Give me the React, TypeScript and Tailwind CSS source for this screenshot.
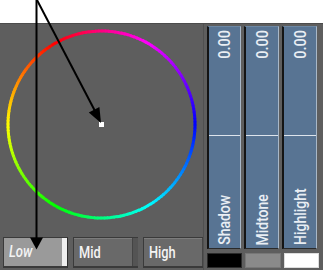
import React from "react";

const CX = 101.5;
const CY = 100.5;
const R = 93.5;
const N = 180;

function pt(a: number) {
  const rad = (a * Math.PI) / 180;
  return [CX + R * Math.sin(rad), CY - R * Math.cos(rad)];
}

const segs = Array.from({ length: N }, (_, i) => {
  const a0 = (i * 360) / N;
  const a1 = ((i + 1) * 360) / N + 0.6;
  const [x0, y0] = pt(a0);
  const [x1, y1] = pt(a1);
  const mid = (a0 + a1) / 2;
  const hue = (((330 - mid) % 360) + 360) % 360;
  return {
    d: `M ${x0.toFixed(2)} ${y0.toFixed(2)} A ${R} ${R} 0 0 1 ${x1.toFixed(2)} ${y1.toFixed(2)}`,
    color: `hsl(${hue.toFixed(1)}, 100%, 50%)`,
  };
});

const FONT = "font-[Roboto,'Liberation_Sans',Arial,sans-serif]";

function Button({ label, active }: { label: string; active?: boolean }) {
  if (active) {
    return (
      <div className="flex h-[31px] w-[65px] shrink-0 border-t border-b-2 border-l border-[#3a3a3a] border-r border-r-[#2e2e2e]">
        <div className={`flex flex-1 items-center bg-[#9a9a9a] pl-[5px] text-[16px] font-medium italic text-[#f4f4f4] ${FONT}`}>
          <span className="block origin-left scale-x-[0.82]">{label}</span>
        </div>
        <div className="w-[5px] bg-[#efefef]" />
      </div>
    );
  }
  return (
    <div className="flex h-[31px] w-[65px] shrink-0 border-t border-b-2 border-l border-[#3a3a3a]">
      <div className={`flex flex-1 items-center border-t border-[#7c7c7c] bg-[#696969] pl-[5px] text-[16px] font-medium text-[#f4f4f4] ${FONT}`}>
        <span className="block origin-left scale-x-[0.8]">{label}</span>
      </div>
      <div className="w-[6px] border-l border-[#444] bg-[#545454]" />
    </div>
  );
}

function Panel({ label }: { label: string }) {
  return (
    <div className="flex flex-col">
      <div className="flex h-[223px] flex-col border-l-2 border-r border-b border-l-[#141414] border-r-[#a8b7c7] border-b-[#2a2a2a] border-t border-t-[#6c87a3] bg-[#587493]">
        <div className="flex h-[109px] flex-col items-center border-b border-[#dde4ec] pt-[3px]">
          <span className={`rotate-180 text-[17px] font-medium leading-[17px] text-[#e9eef4] [writing-mode:vertical-rl] ${FONT}`}>
            <span className="block origin-bottom scale-y-[0.85]">0.00</span>
          </span>
        </div>
        <div className="flex flex-1 flex-col items-center justify-end pb-[3px]">
          <span className={`rotate-180 text-[17px] font-medium leading-[17px] text-[#e9eef4] [writing-mode:vertical-rl] ${FONT}`}>
            <span className="block origin-top scale-y-[0.82]">{label}</span>
          </span>
        </div>
      </div>
    </div>
  );
}

export default function App() {
  return (
    <div className="relative h-[270px] w-[323px] overflow-hidden bg-white">
      <div className="h-[23px] bg-white" />
      <div className="flex h-[247px] border-t border-[#4c4c4c] bg-[#5e5e5e]">
        <div className="flex w-[203px] shrink-0 flex-col">
          <svg width="203" height="213" className="block">
            {segs.map((s, i) => (
              <path key={i} d={s.d} stroke={s.color} strokeWidth={3} fill="none" />
            ))}
            <rect x="99" y="98" width="5" height="5" fill="#ffffff" />
          </svg>
          <div className="flex gap-[5px] overflow-hidden pl-[3px]">
            <Button label="Low" active />
            <Button label="Mid" />
            <Button label="High" />
          </div>
        </div>
        <div className="flex flex-1 flex-col border-l border-[#505050] pl-[3px] pt-[2px]">
          <div className="grid grid-cols-[34px_35px_35px] gap-[3px]">
            <Panel label="Shadow" />
            <Panel label="Midtone" />
            <Panel label="Highlight" />
          </div>
          <div className="mt-[4px] grid grid-cols-[35px_36px_35px] gap-[3px]">
            <div className="h-[15px] border border-[#2a2a2a] bg-black" />
            <div className="h-[15px] border border-[#777] bg-[#8a8a8a]" />
            <div className="h-[15px] border border-[#ddd] bg-white" />
          </div>
        </div>
      </div>
      <svg
        className="pointer-events-none absolute left-0 top-0"
        width="323"
        height="270"
      >
        <line x1="36.5" y1="0" x2="36.5" y2="240" stroke="#000" strokeWidth="2" />
        <polygon points="30,237.5 43,237.5 36.5,249.5" fill="#000" />
        <line x1="37" y1="0" x2="95" y2="111" stroke="#000" strokeWidth="2" />
        <polygon points="101,123 88.8,112.5 99.4,106.9" fill="#000" />
      </svg>
    </div>
  );
}
